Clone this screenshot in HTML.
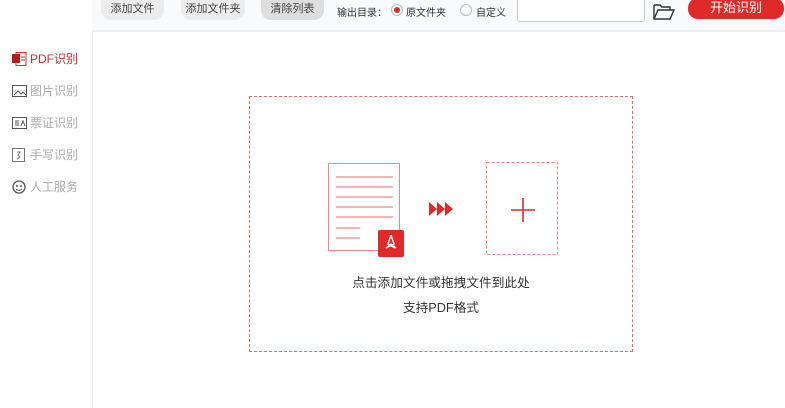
<!DOCTYPE html>
<html><head><meta charset="utf-8"><style>
*{margin:0;padding:0;box-sizing:border-box}
body{width:785px;height:408px;background:#fff;font-family:"Liberation Sans","Noto Sans CJK SC",sans-serif;position:relative;overflow:hidden;color:#555}
.top{position:absolute;left:92px;top:0;width:693px;height:32px;background:#f8fafc;border-bottom:2px solid #eceef0}
.side{position:absolute;left:0;top:0;width:93px;height:408px;border-right:1px solid #ececec;background:#fff}
.btn{position:absolute;top:0;height:20px;border-radius:0 0 10px 10px;background:#ececec;font-size:11px;line-height:18px;text-align:center;color:#444}
.abs{position:absolute}
.item{position:absolute;left:12px;font-size:12px;color:#aaa;height:14px;line-height:14px}
.item svg{position:absolute;left:0;top:0}
.item span{position:absolute;left:18px;white-space:nowrap}
</style></head><body>
<div class="side"></div>
<div class="top"></div>
<div class="btn" style="left:101px;width:63px">添加文件</div>
<div class="btn" style="left:181px;width:64px">添加文件夹</div>
<div class="btn" style="left:261px;width:63px;background:#dedede">清除列表</div>
<div class="abs" style="left:337px;top:4px;font-size:10px;color:#333">输出目录：</div>
<div class="abs" style="left:391px;top:4px;width:12px;height:12px;border:1px solid #bbb;border-radius:50%;background:#fff"><div style="position:absolute;left:2px;top:2px;width:6px;height:6px;border-radius:50%;background:#e02a2a"></div></div>
<div class="abs" style="left:406px;top:4px;font-size:10px;color:#333">原文件夹</div>
<div class="abs" style="left:460px;top:4px;width:12px;height:12px;border:1px solid #bbb;border-radius:50%;background:#fff"></div>
<div class="abs" style="left:476px;top:4px;font-size:10px;color:#333">自定义</div>
<div class="abs" style="left:517px;top:-2px;width:128px;height:24px;border:1px solid #ccc;border-radius:3px;background:#fff"></div>
<svg class="abs" style="left:653px;top:4px" width="22" height="16" viewBox="0 0 22 16"><path d="M1 1h6l2 2h8v3M1 1v14h16l4-9H5L1 15" fill="none" stroke="#333" stroke-width="1.4"/></svg>
<div class="abs" style="left:688px;top:-2px;width:96px;height:21px;border-radius:10px;background:#e02a2a;color:#fff;font-size:13px;text-align:center;line-height:20px">开始识别</div>

<div class="item" style="top:52px;color:#d03030"><svg width="16" height="14"><rect x="4" y="0.5" width="10" height="13" fill="none" stroke="#c33"/><rect x="0" y="2" width="8" height="9" fill="#b71c1c"/><path d="M9 5h4M9 8h4" stroke="#c33"/></svg><span style="font-size:12px">PDF识别</span></div>
<div class="item" style="top:84px"><svg width="16" height="14"><rect x="0.5" y="1.5" width="14" height="11" fill="none" stroke="#555"/><path d="M2 11l4-4 3 3 2-2 3 3" fill="none" stroke="#555"/></svg><span>图片识别</span></div>
<div class="item" style="top:116px"><svg width="16" height="14"><rect x="0.5" y="1.5" width="14" height="11" fill="none" stroke="#555"/><path d="M3 5h4M3 7h4M3 9h4M9 10l2-5 2 5" fill="none" stroke="#555"/></svg><span>票证识别</span></div>
<div class="item" style="top:148px"><svg width="16" height="14"><rect x="0.5" y="0.5" width="12" height="13" fill="none" stroke="#777"/><path d="M5 4h3l-2 3 2 2-3 2" fill="none" stroke="#777"/></svg><span>手写识别</span></div>
<div class="item" style="top:180px"><svg width="16" height="14"><circle cx="7" cy="7" r="6" fill="none" stroke="#555" stroke-width="1.3"/><circle cx="5" cy="6" r="1" fill="#555"/><circle cx="9" cy="6" r="1" fill="#555"/><path d="M4 9q3 3 6 0" fill="none" stroke="#555"/></svg><span>人工服务</span></div>

<div class="abs" style="left:249px;top:96px;width:384px;height:256px;border:1px dashed #e07070"></div>
<svg class="abs" style="left:320px;top:155px" width="250" height="110">
<rect x="8.5" y="8.5" width="71" height="87" fill="#fff" stroke="#e88"/>
<g stroke="#e88" stroke-width="1.2"><path d="M16 22h57M16 32h57M16 42h57M16 52h57M16 62h57M16 73h24M16 83h24"/></g>
<rect x="58" y="75" width="26" height="27" rx="2" fill="#e02a2a"/>
<path d="M71 80l-3 9 7 4M71 80l3 9-8 4M66 93l5-4 5 4" fill="none" stroke="#fff" stroke-width="1.4"/>
<g fill="#e02a2a"><path d="M109 47l8 7-8 7z"/><path d="M117 47l8 7-8 7z"/><path d="M125 47l8 7-8 7z"/></g>
<rect x="166.5" y="7.5" width="71" height="92" fill="none" stroke="#e88" stroke-dasharray="3,2"/>
<path d="M191 55h24M203 43v24" stroke="#e02a2a" stroke-width="1.6"/>
</svg>
<div class="abs" style="left:249px;top:272px;width:384px;text-align:center;font-size:12.7px;color:#333">点击添加文件或拖拽文件到此处</div>
<div class="abs" style="left:249px;top:297px;width:384px;text-align:center;font-size:12.7px;color:#333">支持PDF格式</div>
</body></html>
